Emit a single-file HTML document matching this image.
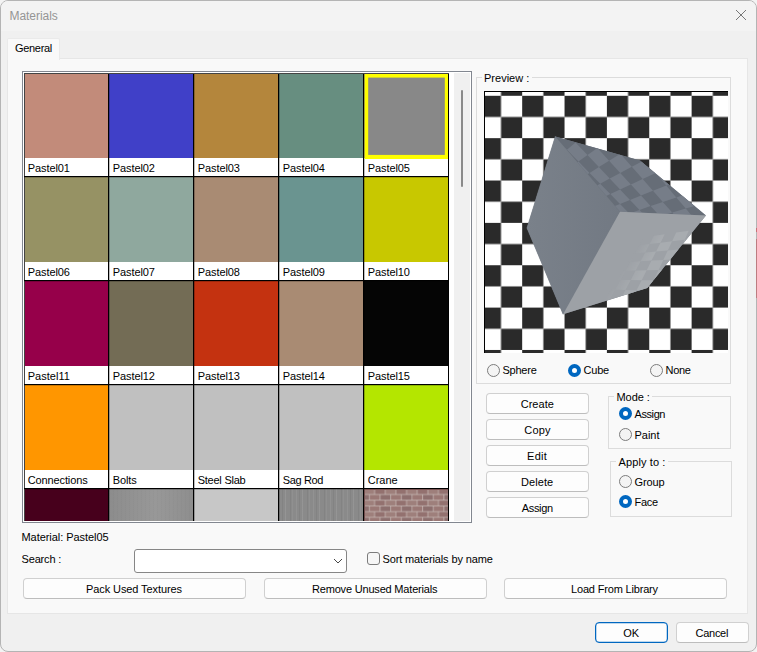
<!DOCTYPE html>
<html><head><meta charset="utf-8"><title>Materials</title>
<style>
html,body{margin:0;padding:0;background:#f3f3f3;}
body{width:757px;height:652px;overflow:hidden;position:relative;font-family:"Liberation Sans",sans-serif;font-size:11px;color:#000;}
#win{position:absolute;left:0;top:0;width:755px;height:650px;border:1px solid #b4b4b4;border-radius:8px;background:#f0f0f0;overflow:hidden;}
#tb{position:absolute;left:0;top:0;width:755px;height:30px;background:#f3f3f3;}
.a{position:absolute;white-space:nowrap;line-height:14px;}
#tab{left:6px;top:37px;width:51px;height:21px;background:#f9f9f9;border:1px solid #eaeaea;border-bottom:none;border-radius:2px 2px 0 0;}
#page{left:6px;top:57px;width:739px;height:554px;background:#f9f9f9;border:1px solid #e6e6e6;}
#list{left:21px;top:70px;width:448px;height:450px;border:1px solid #828790;background:#fff;overflow:hidden;}
.c{position:absolute;width:84px;height:84px;}
.vl{position:absolute;width:1px;background:#000;}
.hl{position:absolute;height:1px;background:#000;}
.btn{position:absolute;box-sizing:border-box;background:#fdfdfd;border:1px solid #d0d0d0;border-bottom-color:#bdbdbd;border-radius:4px;}
.grp{position:absolute;box-sizing:border-box;border:1px solid #dcdcdc;}
.gl{position:absolute;background:#f9f9f9;height:14px;}
.r{position:absolute;box-sizing:border-box;width:13px;height:13px;border-radius:50%;border:1px solid #7c7c7c;background:#f4f4f4;}
.r.on{border:4px solid #0067c0;background:#fff;}
</style></head><body>
<div id="win">
<div id="tb"></div>
<span id="t1" class="a" style="left:8.5px;top:8px;letter-spacing:-0.048px;font-size:12px;color:#959595;">Materials</span>
<svg class="a" style="left:734px;top:8px" width="12" height="12" viewBox="0 0 12 12"><path d="M1 1 L11 11 M11 1 L1 11" stroke="#777" stroke-width="1" fill="none"/></svg>
<div class="a" id="page"></div>
<div class="a" id="tab"></div>
<span id="t2" class="a" style="left:14px;top:40px;letter-spacing:-0.307px;">General</span>
<div class="a" id="list">
<div class="c" style="left:2px;top:2px;width:83px;height:84px;background-color:#c28b7a;"></div>
<span id="t3" class="a" style="left:4.699999999999999px;top:89px;letter-spacing:-0.073px;">Pastel01</span>
<div class="c" style="left:86px;top:2px;width:84px;height:84px;background-color:#4040c8;"></div>
<span id="t4" class="a" style="left:89.7px;top:89px;letter-spacing:-0.073px;">Pastel02</span>
<div class="c" style="left:171px;top:2px;width:84px;height:84px;background-color:#b4863c;"></div>
<span id="t5" class="a" style="left:174.7px;top:89px;letter-spacing:-0.073px;">Pastel03</span>
<div class="c" style="left:256px;top:2px;width:84px;height:84px;background-color:#678e80;"></div>
<span id="t6" class="a" style="left:259.7px;top:89px;letter-spacing:-0.073px;">Pastel04</span>
<div class="c" style="left:341px;top:2px;width:84px;height:84px;background-color:#888888;"></div>
<span id="t7" class="a" style="left:344.7px;top:89px;letter-spacing:-0.073px;">Pastel05</span>
<div class="c" style="left:2px;top:105px;width:83px;height:85px;background-color:#969264;"></div>
<span id="t8" class="a" style="left:4.699999999999999px;top:193px;letter-spacing:-0.073px;">Pastel06</span>
<div class="c" style="left:86px;top:105px;width:84px;height:85px;background-color:#8fa89e;"></div>
<span id="t9" class="a" style="left:89.7px;top:193px;letter-spacing:-0.073px;">Pastel07</span>
<div class="c" style="left:171px;top:105px;width:84px;height:85px;background-color:#a98b73;"></div>
<span id="t10" class="a" style="left:174.7px;top:193px;letter-spacing:-0.073px;">Pastel08</span>
<div class="c" style="left:256px;top:105px;width:84px;height:85px;background-color:#6a9490;"></div>
<span id="t11" class="a" style="left:259.7px;top:193px;letter-spacing:-0.073px;">Pastel09</span>
<div class="c" style="left:341px;top:105px;width:84px;height:85px;background-color:#c8c800;"></div>
<span id="t12" class="a" style="left:344.7px;top:193px;letter-spacing:-0.073px;">Pastel10</span>
<div class="c" style="left:2px;top:209px;width:83px;height:85px;background-color:#96004a;"></div>
<span id="t13" class="a" style="left:4.699999999999999px;top:297px;letter-spacing:0.043px;">Pastel11</span>
<div class="c" style="left:86px;top:209px;width:84px;height:85px;background-color:#736c55;"></div>
<span id="t14" class="a" style="left:89.7px;top:297px;letter-spacing:-0.073px;">Pastel12</span>
<div class="c" style="left:171px;top:209px;width:84px;height:85px;background-color:#c43210;"></div>
<span id="t15" class="a" style="left:174.7px;top:297px;letter-spacing:-0.073px;">Pastel13</span>
<div class="c" style="left:256px;top:209px;width:84px;height:85px;background-color:#a98b73;"></div>
<span id="t16" class="a" style="left:259.7px;top:297px;letter-spacing:-0.073px;">Pastel14</span>
<div class="c" style="left:341px;top:209px;width:84px;height:85px;background-color:#050505;"></div>
<span id="t17" class="a" style="left:344.7px;top:297px;letter-spacing:-0.073px;">Pastel15</span>
<div class="c" style="left:2px;top:313px;width:83px;height:85px;background-color:#ff9600;"></div>
<span id="t18" class="a" style="left:4.699999999999999px;top:401px;letter-spacing:-0.116px;">Connections</span>
<div class="c" style="left:86px;top:313px;width:84px;height:85px;background-color:#c0c0c0;"></div>
<span id="t19" class="a" style="left:89.7px;top:401px;letter-spacing:-0.117px;">Bolts</span>
<div class="c" style="left:171px;top:313px;width:84px;height:85px;background-color:#c0c0c0;"></div>
<span id="t20" class="a" style="left:174.7px;top:401px;letter-spacing:-0.24px;">Steel Slab</span>
<div class="c" style="left:256px;top:313px;width:84px;height:85px;background-color:#c0c0c0;"></div>
<span id="t21" class="a" style="left:259.7px;top:401px;letter-spacing:-0.335px;">Sag Rod</span>
<div class="c" style="left:341px;top:313px;width:84px;height:85px;background-color:#b4e600;"></div>
<span id="t22" class="a" style="left:344.7px;top:401px;letter-spacing:0.008px;">Crane</span>
<div class="c" style="left:2px;top:417px;width:83px;height:85px;background-color:#47001c;"></div>
<div class="c" style="left:86px;top:417px;width:84px;height:85px;background-color:#8f8f8f;background-image:repeating-linear-gradient(90deg,rgba(0,0,0,0.012) 0 1px,rgba(255,255,255,0.012) 1px 4px),linear-gradient(90deg,#8b8b8b,#979797 55%,#8d8d8d);"></div>
<div class="c" style="left:171px;top:417px;width:84px;height:85px;background-color:#c7c7c7;"></div>
<div class="c" style="left:256px;top:417px;width:84px;height:85px;background-color:#8a8a8a;background-image:repeating-linear-gradient(90deg,rgba(255,255,255,.07) 0 1px,transparent 1px 3px,rgba(0,0,0,.05) 3px 4px,transparent 4px 6px,rgba(255,255,255,.09) 6px 7px,transparent 7px 11px,rgba(0,0,0,.05) 11px 12px,transparent 12px 13px,rgba(255,255,255,.05) 13px 14px,transparent 14px 17px);"></div>
<div class="c" style="left:341px;top:417px;width:84px;height:85px;background-color:#9a6a68;"></div>
<svg class="a" style="left:342px;top:418px" width="84" height="32"><defs><pattern id="bk" x="9.6" y="-1.2" width="21.3" height="11.4" patternUnits="userSpaceOnUse"><rect width="21.3" height="11.4" fill="#cbbfbb"/><rect x="0.35" y="0.35" width="9.95" height="5" fill="#93716f"/><rect x="11" y="0.35" width="9.95" height="5" fill="#9e7f7b"/><rect x="5.9" y="6.05" width="9.95" height="5" fill="#8d6f6e"/><rect x="16.55" y="6.05" width="4.75" height="5" fill="#9a7875"/><rect x="0" y="6.05" width="5.2" height="5" fill="#9a7875"/></pattern></defs><rect width="84" height="32" fill="url(#bk)"/></svg>
<div class="vl" style="left:1px;top:1px;height:460px;background:#444"></div>
<div class="vl" style="left:85px;top:1px;height:460px"></div>
<div class="vl" style="left:86px;top:1px;height:460px;background:rgba(0,0,0,0.25)"></div>
<div class="vl" style="left:170px;top:1px;height:460px"></div>
<div class="vl" style="left:171px;top:1px;height:460px;background:rgba(0,0,0,0.25)"></div>
<div class="vl" style="left:255px;top:1px;height:460px"></div>
<div class="vl" style="left:256px;top:1px;height:460px;background:rgba(0,0,0,0.25)"></div>
<div class="vl" style="left:340px;top:1px;height:460px"></div>
<div class="vl" style="left:341px;top:1px;height:460px;background:rgba(0,0,0,0.25)"></div>
<div class="vl" style="left:425px;top:1px;height:460px"></div>
<div class="hl" style="left:1px;top:1px;width:425px;background:#444"></div>
<div class="hl" style="left:1px;top:104px;width:425px"></div>
<div class="hl" style="left:1px;top:105px;width:425px;background:rgba(0,0,0,0.2)"></div>
<div class="hl" style="left:1px;top:208px;width:425px"></div>
<div class="hl" style="left:1px;top:209px;width:425px;background:rgba(0,0,0,0.2)"></div>
<div class="hl" style="left:1px;top:312px;width:425px"></div>
<div class="hl" style="left:1px;top:313px;width:425px;background:rgba(0,0,0,0.2)"></div>
<div class="hl" style="left:1px;top:416px;width:425px"></div>
<div class="hl" style="left:1px;top:417px;width:425px;background:rgba(0,0,0,0.2)"></div>
<svg class="a" style="left:341px;top:1px" width="85" height="87"><rect x="0.6" y="1" width="83.4" height="85" fill="#ffff00"/><rect x="4.2" y="4.6" width="76.6" height="77.3" fill="#888888"/></svg>
<div class="a" style="left:431px;top:1px;width:16px;height:448px;background:#f0f0f0"></div>
<div class="a" style="left:0;top:449px;width:448px;height:1px;background:#fff"></div>
<div class="a" style="left:438px;top:18px;width:2px;height:97px;background:#8a8a8a;border-radius:1px"></div>
</div>
<div class="grp" style="left:475px;top:76px;width:255px;height:307px"></div>
<div class="gl" style="left:481px;top:70px;width:50px"></div>
<span id="t23" class="a" style="left:483px;top:70px;letter-spacing:0.006px;">Preview :</span>
<div class="a" id="pv" style="left:483px;top:90px;width:244px;height:262px;overflow:hidden;background:#fff">
<svg class="a" style="left:0;top:0" width="244" height="262" viewBox="0 0 244 262"><defs><pattern id="ck" x="-4.18" y="4.80" width="42.36" height="42.36" patternUnits="userSpaceOnUse"><rect width="21.18" height="21.18" fill="#2a2a2a"/><rect x="21.18" y="21.18" width="21.18" height="21.18" fill="#2a2a2a"/></pattern><linearGradient id="lg" x1="0" y1="0" x2="1" y2="0"><stop offset="0" stop-color="#7a818a"/><stop offset="1" stop-color="#727983"/></linearGradient><clipPath id="ct"><polygon points="71.3,45.5 156.0,69.6 221.9,124.4 136.0,120.8"/></clipPath><clipPath id="cr"><polygon points="136.0,120.8 221.9,124.4 163.2,196.9 79.1,223.2"/></clipPath><linearGradient id="mg" gradientUnits="userSpaceOnUse" x1="144" y1="171" x2="159" y2="180.5"><stop offset="0" stop-color="#fff" stop-opacity="0"/><stop offset="1" stop-color="#fff" stop-opacity="1"/></linearGradient><mask id="mr"><rect width="244" height="262" fill="url(#mg)"/></mask></defs><rect width="244" height="262" fill="url(#ck)"/><polygon points="71.3,45.5 156.0,69.6 221.9,124.4 163.2,196.9 79.1,223.2 43.0,137.0" fill="#757c86"/><polygon points="71.3,45.5 43.0,137.0 79.1,223.2 136.0,120.8" fill="url(#lg)" stroke="url(#lg)" stroke-width="0.6"/><polygon points="71.3,45.5 156.0,69.6 221.9,124.4 136.0,120.8" fill="#666d77"/><g clip-path="url(#ct)" fill="#767d88"><polygon points="26.7,44.0 32.1,36.6 44.6,48.7 38.8,55.4"/><polygon points="38.0,28.5 44.5,19.5 58.0,33.3 51.0,41.3"/><polygon points="51.8,9.6 59.8,-1.4 74.3,14.4 65.7,24.3"/><polygon points="68.8,-13.8 79.0,-27.8 94.8,-9.2 83.9,3.3"/><polygon points="90.7,-43.7 104.0,-62.0 121.1,-39.5 107.1,-23.3"/><polygon points="119.5,-83.3 137.7,-108.2 156.2,-80.0 137.3,-58.2"/><polygon points="159.4,-138.0 185.7,-174.0 205.5,-136.8 178.6,-105.8"/><polygon points="44.6,48.7 51.0,41.3 63.3,53.6 56.5,60.2"/><polygon points="58.0,33.3 65.7,24.3 78.9,38.3 70.7,46.3"/><polygon points="74.3,14.4 83.9,3.3 98.2,19.5 88.0,29.4"/><polygon points="94.8,-9.2 107.1,-23.3 122.4,-4.2 109.5,8.3"/><polygon points="121.1,-39.5 137.3,-58.2 153.8,-35.0 137.0,-18.5"/><polygon points="156.2,-80.0 178.6,-105.8 196.2,-76.4 173.3,-54.0"/><polygon points="205.5,-136.8 238.4,-174.7 256.6,-135.5 223.5,-103.1"/><polygon points="50.3,66.3 56.5,60.2 67.9,71.3 61.4,76.7"/><polygon points="63.3,53.6 70.7,46.3 82.9,58.7 75.1,65.3"/><polygon points="78.9,38.3 88.0,29.4 101.0,43.6 91.5,51.5"/><polygon points="98.2,19.5 109.5,8.3 123.5,24.8 111.6,34.7"/><polygon points="122.4,-4.2 137.0,-18.5 151.9,1.1 136.8,13.7"/><polygon points="153.8,-35.0 173.3,-54.0 189.0,-30.1 169.1,-13.4"/><polygon points="196.2,-76.4 223.5,-103.1 239.8,-72.5 212.3,-49.5"/><polygon points="67.9,71.3 75.1,65.3 86.4,76.5 78.9,81.8"/><polygon points="82.9,58.7 91.5,51.5 103.5,64.1 94.5,70.6"/><polygon points="101.0,43.6 111.6,34.7 124.3,49.1 113.4,57.0"/><polygon points="123.5,24.8 136.8,13.7 150.3,30.5 136.6,40.4"/><polygon points="151.9,1.1 169.1,-13.4 183.4,6.7 165.7,19.4"/><polygon points="189.0,-30.1 212.3,-49.5 227.1,-24.8 203.6,-7.9"/><polygon points="239.8,-72.5 272.9,-100.2 287.6,-68.3 254.7,-44.6"/><polygon points="72.0,86.8 78.9,81.8 89.4,92.0 82.2,96.4"/><polygon points="86.4,76.5 94.5,70.6 105.6,81.9 97.1,87.1"/><polygon points="103.5,64.1 113.4,57.0 125.1,69.8 114.9,76.1"/><polygon points="124.3,49.1 136.6,40.4 148.9,55.0 136.4,62.8"/><polygon points="150.3,30.5 165.7,19.4 178.8,36.5 163.0,46.3"/><polygon points="183.4,6.7 203.6,-7.9 217.2,12.7 196.7,25.4"/><polygon points="227.1,-24.8 254.7,-44.6 268.4,-19.0 240.8,-1.9"/><polygon points="89.4,92.0 97.1,87.1 107.4,97.4 99.4,101.7"/><polygon points="105.6,81.9 114.9,76.1 125.7,87.6 116.2,92.7"/><polygon points="125.1,69.8 136.4,62.8 147.8,75.8 136.2,82.0"/><polygon points="148.9,55.0 163.0,46.3 175.0,61.2 160.7,68.9"/><polygon points="178.8,36.5 196.7,25.4 209.1,43.0 191.0,52.7"/><polygon points="217.2,12.7 240.8,-1.9 253.5,19.2 229.8,31.9"/><polygon points="268.4,-19.0 301.1,-39.3 313.3,-12.8 281.0,4.5"/><polygon points="92.0,105.6 99.4,101.7 109.1,111.0 101.4,114.5"/><polygon points="107.4,97.4 116.2,92.7 126.3,103.0 117.3,107.2"/><polygon points="125.7,87.6 136.2,82.0 146.9,93.5 136.1,98.5"/><polygon points="147.8,75.8 160.7,68.9 171.7,82.1 158.7,88.1"/><polygon points="175.0,61.2 191.0,52.7 202.5,67.8 186.3,75.3"/><polygon points="209.1,43.0 229.8,31.9 241.5,49.8 220.8,59.4"/><polygon points="253.5,19.2 281.0,4.5 292.6,26.2 265.2,38.9"/><polygon points="109.1,111.0 117.3,107.2 126.8,116.6 118.3,120.0"/><polygon points="126.3,103.0 136.1,98.5 146.0,108.9 136.0,112.9"/><polygon points="146.9,93.5 158.7,88.1 169.0,99.8 157.0,104.6"/><polygon points="171.7,82.1 186.3,75.3 197.0,88.7 182.3,94.5"/><polygon points="202.5,67.8 220.8,59.4 231.7,74.8 213.4,82.2"/><polygon points="241.5,49.8 265.2,38.9 276.2,57.2 252.5,66.6"/><polygon points="292.6,26.2 324.5,11.5 334.8,33.8 303.3,46.4"/><polygon points="110.5,123.1 118.3,120.0 127.2,128.6 119.2,131.3"/><polygon points="126.8,116.6 136.0,112.9 145.3,122.4 135.9,125.6"/><polygon points="146.0,108.9 157.0,104.6 166.6,115.1 155.5,118.9"/><polygon points="169.0,99.8 182.3,94.5 192.3,106.4 178.8,111.0"/><polygon points="197.0,88.7 213.4,82.2 223.6,95.7 207.1,101.3"/><polygon points="231.7,74.8 252.5,66.6 262.8,82.3 242.1,89.4"/><polygon points="276.2,57.2 303.3,46.4 313.3,65.0 286.4,74.2"/><polygon points="127.2,128.6 135.9,125.6 144.7,134.3 135.8,136.9"/><polygon points="145.3,122.4 155.5,118.9 164.6,128.5 154.2,131.5"/><polygon points="166.6,115.1 178.8,111.0 188.2,121.6 175.9,125.2"/><polygon points="192.3,106.4 207.1,101.3 216.7,113.3 201.8,117.6"/><polygon points="223.6,95.7 242.1,89.4 251.8,103.1 233.3,108.4"/><polygon points="262.8,82.3 286.4,74.2 295.9,90.2 272.5,97.0"/><polygon points="313.3,65.0 344.4,54.4 353.2,73.5 322.6,82.4"/><polygon points="127.6,139.3 135.8,136.9 144.1,144.9 135.7,146.9"/><polygon points="144.7,134.3 154.2,131.5 162.8,140.2 153.1,142.6"/><polygon points="164.6,128.5 175.9,125.2 184.7,134.8 173.3,137.7"/><polygon points="188.2,121.6 201.8,117.6 210.8,128.4 197.2,131.7"/><polygon points="216.7,113.3 233.3,108.4 242.5,120.6 225.9,124.7"/><polygon points="251.8,103.1 272.5,97.0 281.6,110.9 261.0,116.0"/><polygon points="295.9,90.2 322.6,82.4 331.2,98.6 304.9,105.1"/><polygon points="144.1,144.9 153.1,142.6 161.2,150.7 152.0,152.6"/><polygon points="162.8,140.2 173.3,137.7 181.6,146.4 171.0,148.6"/><polygon points="184.7,134.8 197.2,131.7 205.7,141.5 193.2,144.1"/><polygon points="210.8,128.4 225.9,124.7 234.6,135.5 219.5,138.6"/><polygon points="242.5,120.6 261.0,116.0 269.6,128.2 251.2,132.0"/><polygon points="281.6,110.9 304.9,105.1 313.3,119.2 290.2,124.0"/><polygon points="331.2,98.6 361.4,91.2 369.0,107.7 339.3,113.8"/><polygon points="143.6,154.3 152.0,152.6 159.7,160.0 151.1,161.4"/><polygon points="161.2,150.7 171.0,148.6 178.9,156.7 168.9,158.4"/><polygon points="181.6,146.4 193.2,144.1 201.3,152.9 189.6,154.9"/><polygon points="205.7,141.5 219.5,138.6 227.7,148.4 213.9,150.7"/><polygon points="234.6,135.5 251.2,132.0 259.5,143.0 242.8,145.8"/><polygon points="269.6,128.2 290.2,124.0 298.3,136.3 277.9,139.8"/><polygon points="313.3,119.2 339.3,113.8 346.9,128.0 321.2,132.4"/><polygon points="159.7,160.0 168.9,158.4 176.5,165.9 167.1,167.1"/><polygon points="178.9,156.7 189.6,154.9 197.3,163.0 186.5,164.5"/><polygon points="201.3,152.9 213.9,150.7 221.7,159.6 209.0,161.4"/><polygon points="227.7,148.4 242.8,145.8 250.7,155.6 235.6,157.7"/><polygon points="259.5,143.0 277.9,139.8 285.7,150.8 267.3,153.3"/><polygon points="298.3,136.3 321.2,132.4 328.7,144.9 306.0,148.0"/><polygon points="346.9,128.0 376.1,123.1 382.8,137.4 354.1,141.4"/><polygon points="158.4,168.3 167.1,167.1 174.3,174.1 165.5,175.0"/><polygon points="176.5,165.9 186.5,164.5 193.8,171.9 183.7,173.0"/><polygon points="197.3,163.0 209.0,161.4 216.5,169.5 204.7,170.8"/><polygon points="221.7,159.6 235.6,157.7 243.1,166.6 229.3,168.1"/><polygon points="250.7,155.6 267.3,153.3 274.8,163.2 258.3,165.0"/><polygon points="285.7,150.8 306.0,148.0 313.3,159.1 293.1,161.3"/><polygon points="328.7,144.9 354.1,141.4 360.8,154.0 335.7,156.7"/><polygon points="174.3,174.1 183.7,173.0 190.7,180.0 181.2,180.7"/><polygon points="193.8,171.9 204.7,170.8 211.8,178.3 200.9,179.2"/><polygon points="216.5,169.5 229.3,168.1 236.5,176.3 223.7,177.3"/><polygon points="243.1,166.6 258.3,165.0 265.5,174.0 250.3,175.2"/><polygon points="274.8,163.2 293.1,161.3 300.1,171.2 282.0,172.6"/><polygon points="313.3,159.1 335.7,156.7 342.4,167.8 320.2,169.6"/><polygon points="360.8,154.0 389.0,150.9 394.9,163.6 367.1,165.8"/><polygon points="172.3,181.4 181.2,180.7 187.9,187.2 178.9,187.7"/><polygon points="190.7,180.0 200.9,179.2 207.7,186.1 197.4,186.7"/><polygon points="211.8,178.3 223.7,177.3 230.6,184.8 218.7,185.5"/><polygon points="236.5,176.3 250.3,175.2 257.2,183.4 243.4,184.1"/><polygon points="265.5,174.0 282.0,172.6 288.8,181.6 272.3,182.5"/><polygon points="300.1,171.2 320.2,169.6 326.7,179.6 306.9,180.7"/><polygon points="342.4,167.8 367.1,165.8 373.1,177.0 348.7,178.4"/></g><polygon points="136.0,120.8 221.9,124.4 163.2,196.9 79.1,223.2" fill="#9da1a6"/><g clip-path="url(#cr)"><g><g mask="url(#mr)" fill="#a8acb0"><polygon points="107.4,159.8 114.2,159.0 109.7,166.0 102.9,166.6"/><polygon points="98.2,173.7 105.0,173.3 100.2,180.8 93.5,181.0"/><polygon points="88.5,188.6 95.2,188.7 90.1,196.7 83.4,196.4"/><polygon points="78.1,204.5 84.7,205.1 79.2,213.8 72.6,212.9"/><polygon points="66.9,221.6 73.4,222.8 67.4,232.2 61.0,230.6"/><polygon points="54.9,240.0 61.2,241.9 54.8,252.0 48.6,249.7"/><polygon points="118.6,152.1 125.8,151.1 121.5,158.1 114.2,159.0"/><polygon points="109.7,166.0 117.0,165.4 112.3,172.9 105.0,173.3"/><polygon points="100.2,180.8 107.4,180.7 102.4,188.7 95.2,188.7"/><polygon points="90.1,196.7 97.2,197.1 91.8,205.7 84.7,205.1"/><polygon points="79.2,213.8 86.2,214.7 80.4,224.1 73.4,222.8"/><polygon points="67.4,232.2 74.3,233.8 68.0,243.9 61.2,241.9"/><polygon points="121.5,158.1 129.2,157.2 124.7,164.7 117.0,165.4"/><polygon points="112.3,172.9 120.0,172.4 115.1,180.5 107.4,180.7"/><polygon points="102.4,188.7 110.1,188.8 104.8,197.4 97.2,197.1"/><polygon points="91.8,205.7 99.4,206.4 93.7,215.7 86.2,214.7"/><polygon points="80.4,224.1 87.8,225.4 81.7,235.5 74.3,233.8"/><polygon points="68.0,243.9 75.3,246.1 68.7,257.1 61.5,254.4"/><polygon points="133.6,150.0 141.8,148.8 137.4,156.2 129.2,157.2"/><polygon points="124.7,164.7 132.9,163.9 128.2,171.9 120.0,172.4"/><polygon points="115.1,180.5 123.3,180.2 118.3,188.8 110.1,188.8"/><polygon points="104.8,197.4 113.0,197.8 107.5,207.1 99.4,206.4"/><polygon points="93.7,215.7 101.8,216.8 95.9,226.9 87.8,225.4"/><polygon points="81.7,235.5 89.7,237.4 83.2,248.4 75.3,246.1"/><polygon points="137.4,156.2 146.2,155.2 141.7,163.2 132.9,163.9"/><polygon points="128.2,171.9 137.0,171.4 132.1,180.0 123.3,180.2"/><polygon points="118.3,188.8 127.0,188.9 121.8,198.2 113.0,197.8"/><polygon points="107.5,207.1 116.3,207.9 110.5,218.0 101.8,216.8"/><polygon points="95.9,226.9 104.5,228.5 98.3,239.5 89.7,237.4"/><polygon points="83.2,248.4 91.8,251.0 84.9,263.0 76.5,259.9"/><polygon points="150.6,147.6 159.9,146.2 155.6,154.1 146.2,155.2"/><polygon points="141.7,163.2 151.1,162.3 146.4,170.9 137.0,171.4"/><polygon points="132.1,180.0 141.5,179.7 136.5,189.0 127.0,188.9"/><polygon points="121.8,198.2 131.2,198.6 125.7,208.7 116.3,207.9"/><polygon points="110.5,218.0 119.9,219.2 113.9,230.2 104.5,228.5"/><polygon points="98.3,239.5 107.6,241.7 101.0,253.7 91.8,251.0"/><polygon points="155.6,154.1 165.6,152.9 161.2,161.4 151.1,162.3"/><polygon points="146.4,170.9 156.5,170.3 151.7,179.5 141.5,179.7"/><polygon points="136.5,189.0 146.7,189.1 141.4,199.1 131.2,198.6"/><polygon points="125.7,208.7 135.9,209.6 130.1,220.6 119.9,219.2"/><polygon points="113.9,230.2 124.1,232.0 117.8,244.1 107.6,241.7"/><polygon points="101.0,253.7 111.1,256.7 104.2,270.0 94.1,266.3"/><polygon points="169.9,144.8 180.7,143.3 176.5,151.7 165.6,152.9"/><polygon points="161.2,161.4 172.1,160.5 167.5,169.6 156.5,170.3"/><polygon points="151.7,179.5 162.7,179.2 157.7,189.2 146.7,189.1"/><polygon points="141.4,199.1 152.4,199.6 147.0,210.6 135.9,209.6"/><polygon points="130.1,220.6 141.2,222.0 135.2,234.1 124.1,232.0"/><polygon points="117.8,244.1 128.9,246.7 122.2,260.0 111.1,256.7"/><polygon points="176.5,151.7 188.1,150.3 183.8,159.4 172.1,160.5"/><polygon points="167.5,169.6 179.3,168.9 174.6,178.9 162.7,179.2"/><polygon points="157.7,189.2 169.6,189.3 164.4,200.2 152.4,199.6"/><polygon points="147.0,210.6 159.0,211.6 153.3,223.6 141.2,222.0"/><polygon points="135.2,234.1 147.3,236.3 141.0,249.6 128.9,246.7"/><polygon points="122.2,260.0 134.3,263.6 127.3,278.4 115.2,274.0"/><polygon points="192.2,141.6 204.7,139.8 200.7,148.8 188.1,150.3"/><polygon points="183.8,159.4 196.5,158.3 192.1,168.2 179.3,168.9"/><polygon points="174.6,178.9 187.5,178.5 182.6,189.4 169.6,189.3"/><polygon points="164.4,200.2 177.5,200.8 172.2,212.8 159.0,211.6"/><polygon points="153.3,223.6 166.6,225.4 160.6,238.7 147.3,236.3"/><polygon points="141.0,249.6 154.4,252.7 147.7,267.6 134.3,263.6"/><polygon points="200.7,148.8 214.3,147.3 210.3,157.1 196.5,158.3"/><polygon points="192.1,168.2 206.0,167.4 201.5,178.2 187.5,178.5"/><polygon points="182.6,189.4 196.8,189.5 191.9,201.5 177.5,200.8"/><polygon points="172.2,212.8 186.6,214.0 181.1,227.3 166.6,225.4"/><polygon points="160.6,238.7 175.3,241.4 169.1,256.2 154.4,252.7"/><polygon points="147.7,267.6 162.6,272.0 155.7,288.7 140.7,283.3"/><polygon points="218.2,137.9 232.9,135.8 229.2,145.5 214.3,147.3"/><polygon points="210.3,157.1 225.3,155.7 221.2,166.5 206.0,167.4"/><polygon points="201.5,178.2 216.9,177.7 212.4,189.6 196.8,189.5"/><polygon points="191.9,201.5 207.6,202.2 202.6,215.4 186.6,214.0"/><polygon points="181.1,227.3 197.2,229.5 191.6,244.3 175.3,241.4"/><polygon points="169.1,256.2 185.6,260.1 179.2,276.9 162.6,272.0"/><polygon points="229.2,145.5 245.4,143.6 241.7,154.3 225.3,155.7"/><polygon points="221.2,166.5 237.9,165.5 233.8,177.3 216.9,177.7"/><polygon points="212.4,189.6 229.6,189.8 225.0,203.0 207.6,202.2"/><polygon points="202.6,215.4 220.2,217.0 215.1,231.9 197.2,229.5"/><polygon points="191.6,244.3 209.7,247.7 204.0,264.5 185.6,260.1"/><polygon points="179.2,276.9 197.8,282.5 191.2,301.7 172.4,294.8"/><polygon points="248.9,133.5 266.3,131.0 263.2,141.6 245.4,143.6"/><polygon points="241.7,154.3 259.8,152.7 256.3,164.4 237.9,165.5"/><polygon points="233.8,177.3 252.5,176.8 248.6,189.9 229.6,189.8"/><polygon points="225.0,203.0 244.4,203.9 239.9,218.7 220.2,217.0"/><polygon points="215.1,231.9 235.2,234.5 230.1,251.4 209.7,247.7"/><polygon points="204.0,264.5 224.7,269.4 218.9,288.7 197.8,282.5"/><polygon points="263.2,141.6 282.7,139.3 279.7,150.9 259.8,152.7"/><polygon points="256.3,164.4 276.6,163.2 273.3,176.3 252.5,176.8"/><polygon points="248.6,189.9 269.8,190.1 266.0,204.9 244.4,203.9"/><polygon points="239.9,218.7 262.0,220.7 257.7,237.5 235.2,234.5"/><polygon points="230.1,251.4 253.1,255.6 248.2,275.0 224.7,269.4"/><polygon points="218.9,288.7 242.9,295.8 237.1,318.4 212.6,309.5"/></g></g></g><rect x="0" y="0" width="244" height="1" fill="#000"/><rect x="0" y="0" width="1" height="262" fill="#000"/></svg>
</div>
<div class="r" style="left:486.0px;top:362.5px"></div>
<span id="t24" class="a" style="left:501.5px;top:362px;letter-spacing:-0.237px;">Sphere</span>
<div class="r on" style="left:567.0px;top:362.5px"></div>
<span id="t25" class="a" style="left:582.5px;top:362px;letter-spacing:-0.199px;">Cube</span>
<div class="r" style="left:648.5px;top:362.5px"></div>
<span id="t26" class="a" style="left:664.5px;top:362px;letter-spacing:-0.299px;">None</span>
<div class="btn" style="left:485px;top:392px;width:103px;height:21px;"></div><span id="t27" class="a" style="left:519.7px;top:396px;letter-spacing:0.034px;">Create</span>
<div class="btn" style="left:485px;top:418px;width:103px;height:21px;"></div><span id="t28" class="a" style="left:523.3px;top:422px;letter-spacing:0.138px;">Copy</span>
<div class="btn" style="left:485px;top:444px;width:103px;height:21px;"></div><span id="t29" class="a" style="left:526.1px;top:448px;letter-spacing:0.244px;">Edit</span>
<div class="btn" style="left:485px;top:470px;width:103px;height:21px;"></div><span id="t30" class="a" style="left:520.1px;top:474px;letter-spacing:0.061px;">Delete</span>
<div class="btn" style="left:485px;top:496px;width:103px;height:21px;"></div><span id="t31" class="a" style="left:520.7px;top:500px;letter-spacing:-0.306px;">Assign</span>
<div class="grp" style="left:607px;top:395px;width:123px;height:53px"></div>
<div class="gl" style="left:613px;top:389px;width:38px"></div>
<span id="t32" class="a" style="left:615.5px;top:389px;letter-spacing:-0.068px;">Mode :</span>
<div class="r on" style="left:618.0px;top:406.0px"></div>
<span id="t33" class="a" style="left:633.5px;top:406px;letter-spacing:-0.406px;">Assign</span>
<div class="r" style="left:618.0px;top:427.0px"></div>
<span id="t34" class="a" style="left:633.5px;top:427px;letter-spacing:-0.02px;">Paint</span>
<div class="grp" style="left:609px;top:460px;width:122px;height:56px"></div>
<div class="gl" style="left:615px;top:454px;width:52px"></div>
<span id="t35" class="a" style="left:617.5px;top:454px;letter-spacing:0.116px;">Apply to :</span>
<div class="r" style="left:618.0px;top:474.0px"></div>
<span id="t36" class="a" style="left:633.5px;top:474px;letter-spacing:-0.095px;">Group</span>
<div class="r on" style="left:618.0px;top:494.0px"></div>
<span id="t37" class="a" style="left:633.5px;top:494px;letter-spacing:-0.256px;">Face</span>
<span id="t38" class="a" style="left:20.5px;top:529px;letter-spacing:-0.05px;">Material: Pastel05</span>
<span id="t39" class="a" style="left:20.5px;top:551px;letter-spacing:-0.153px;">Search :</span>
<div class="a" style="left:133px;top:548px;width:211px;height:22px;background:#fff;border:1px solid #868686;border-radius:3px"></div>
<svg class="a" style="left:332px;top:557px" width="10" height="7" viewBox="0 0 10 7"><path d="M1 1 L5 5 L9 1" stroke="#484848" stroke-width="1" fill="none"/></svg>
<div class="a" style="left:366px;top:551px;width:11px;height:11px;border:1px solid #7c7c7c;border-radius:3px;background:#f6f6f6"></div>
<span id="t40" class="a" style="left:381.5px;top:551px;letter-spacing:-0.134px;">Sort materials by name</span>
<div class="btn" style="left:22px;top:577px;width:223px;height:21px;"></div><span id="t41" class="a" style="left:85px;top:581px;letter-spacing:-0.096px;">Pack Used Textures</span>
<div class="btn" style="left:263px;top:577px;width:223px;height:21px;"></div><span id="t42" class="a" style="left:311px;top:581px;letter-spacing:-0.188px;">Remove Unused Materials</span>
<div class="btn" style="left:503px;top:577px;width:223px;height:21px;"></div><span id="t43" class="a" style="left:570px;top:581px;letter-spacing:-0.173px;">Load From Library</span>
<div class="btn" style="left:594px;top:621px;width:73px;height:21px;border:1px solid #0067c0;box-shadow:inset 0 0 0 0.25px #0067c0;"></div><span id="t44" class="a" style="left:622.3px;top:625px;letter-spacing:-0.106px;">OK</span>
<div class="btn" style="left:675px;top:621px;width:73px;height:21px;"></div><span id="t45" class="a" style="left:694.6px;top:625px;letter-spacing:-0.29px;">Cancel</span>
</div>
<div class="a" style="left:756px;top:228px;width:1px;height:4px;background:#c87078"></div>
<div class="a" style="left:756px;top:239px;width:1px;height:59px;background:#bc7c80"></div>
</body></html>
